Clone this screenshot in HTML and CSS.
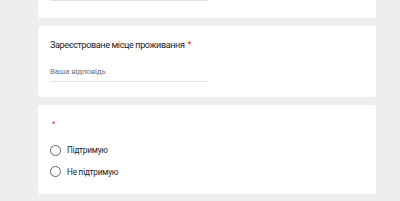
FILE: index.html
```html
<!DOCTYPE html>
<html lang="uk">
<head>
<meta charset="utf-8">
<link rel="stylesheet" href="styles.css">
</head>
<body>
<div class="page">
  <div class="card card-top">
    <div class="answer-line"></div>
  </div>
  <div class="card card-q">
    <div class="q-title">Зареєстроване місце проживання <span class="req">*</span></div>
    <div class="answer">Ваша відповідь</div>
  </div>
  <div class="card card-r">
    <div class="q-title"><span class="req req-solo">*</span></div>
    <div class="options">
      <label class="opt"><span class="radio"></span><span class="opt-text">Підтримую</span></label>
      <label class="opt"><span class="radio"></span><span class="opt-text">Не підтримую</span></label>
    </div>
  </div>
</div>
</body>
</html>
```

FILE: styles.css
```css
html, body {
  margin: 0;
  padding: 0;
  background: #efeeec;
  font-family: Roboto, "Liberation Sans", Arial, sans-serif;
}
.page {
  width: 338px;
  margin-left: 38px;
  display: flex;
  flex-direction: column;
  gap: 8px;
}
.card {
  background: #ffffff;
  border-radius: 3px;
  padding: 0 12px;
  box-sizing: border-box;
}
.card-top {
  height: 18px;
  border-radius: 0 0 3px 3px;
}
.answer-line {
  width: 157px;
  height: 1px;
  background: #e2e2e2;
}
.card-q {
  height: 71px;
  padding-top: 12px;
}
.q-title {
  font-size: 9px;
  letter-spacing: -0.35px;
  line-height: 14px;
  color: #202124;
  height: 14px;
}
.req {
  color: #d93025;
  margin-left: 1px;
}
.req-solo {
  margin-left: 2px;
  font-size: 8px;
}
.answer {
  margin-top: 14px;
  width: 157px;
  font-size: 8px;
  letter-spacing: -0.2px;
  line-height: 11px;
  color: #70757a;
  padding-bottom: 4px;
  border-bottom: 1px solid #e2e2e2;
}
.card-r {
  height: 89px;
  padding-top: 11px;
}
.options {
  margin-top: 14px;
  display: flex;
  flex-direction: column;
  gap: 9.5px;
}
.opt {
  display: flex;
  align-items: center;
  gap: 6px;
  height: 12px;
}
.radio {
  width: 11px;
  height: 11px;
  box-sizing: border-box;
  border: 1.4px solid #5f6368;
  border-radius: 50%;
  flex: none;
}
.opt-text {
  font-size: 8.2px;
  letter-spacing: -0.2px;
  color: #202124;
}
```
